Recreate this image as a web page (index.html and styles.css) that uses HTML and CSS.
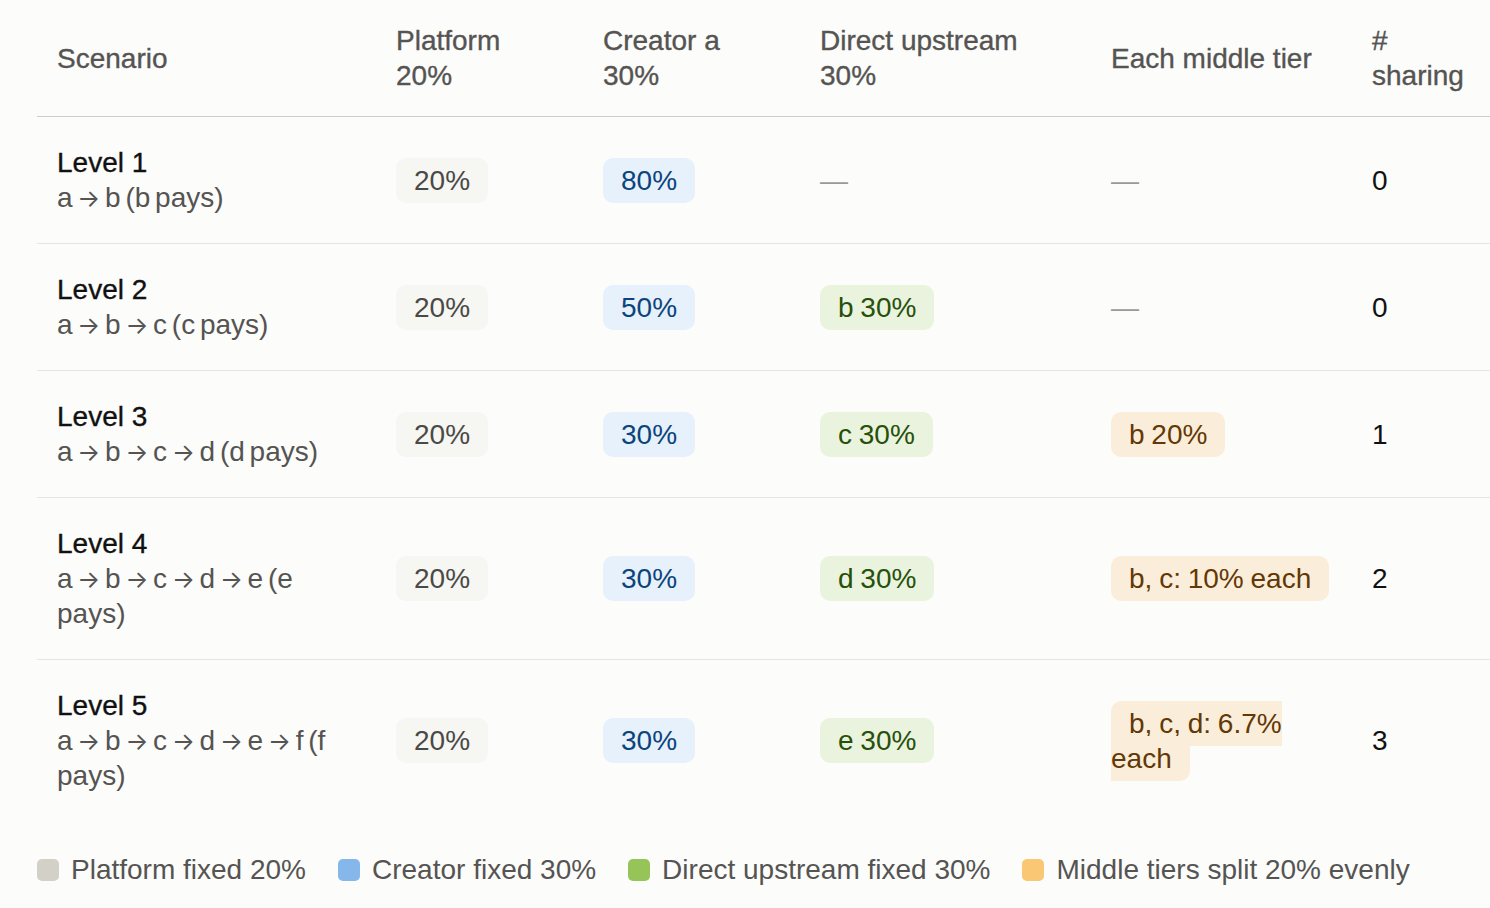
FILE: index.html
```html
<!DOCTYPE html>
<html lang="en">
<head>
<meta charset="utf-8">
<title>Revenue sharing scenarios</title>
<link rel="stylesheet" href="styles.css">
</head>
<body>
<main class="page">
  <table class="split-table">
    <colgroup>
      <col class="c-scen"><col class="c-plat"><col class="c-crea"><col class="c-dir"><col class="c-mid"><col class="c-num">
    </colgroup>
    <thead>
      <tr>
        <th>Scenario</th>
        <th>Platform 20%</th>
        <th>Creator a 30%</th>
        <th>Direct upstream 30%</th>
        <th>Each middle tier</th>
        <th># sharing</th>
      </tr>
    </thead>
    <tbody>
      <tr>
        <td><div class="lvl">Level 1</div><div class="path">a <span class="arr">→</span> b (b pays)</div></td>
        <td><span class="pill p-gray">20%</span></td>
        <td><span class="pill p-blue">80%</span></td>
        <td><span class="dash">—</span></td>
        <td><span class="dash">—</span></td>
        <td class="num">0</td>
      </tr>
      <tr>
        <td><div class="lvl">Level 2</div><div class="path">a <span class="arr">→</span> b <span class="arr">→</span> c (c pays)</div></td>
        <td><span class="pill p-gray">20%</span></td>
        <td><span class="pill p-blue">50%</span></td>
        <td><span class="pill p-green">b 30%</span></td>
        <td><span class="dash">—</span></td>
        <td class="num">0</td>
      </tr>
      <tr>
        <td><div class="lvl">Level 3</div><div class="path">a <span class="arr">→</span> b <span class="arr">→</span> c <span class="arr">→</span> d (d pays)</div></td>
        <td><span class="pill p-gray">20%</span></td>
        <td><span class="pill p-blue">30%</span></td>
        <td><span class="pill p-green">c 30%</span></td>
        <td><span class="pill p-amber">b 20%</span></td>
        <td class="num">1</td>
      </tr>
      <tr>
        <td><div class="lvl">Level 4</div><div class="path">a <span class="arr">→</span> b <span class="arr">→</span> c <span class="arr">→</span> d <span class="arr">→</span> e (e pays)</div></td>
        <td><span class="pill p-gray">20%</span></td>
        <td><span class="pill p-blue">30%</span></td>
        <td><span class="pill p-green">d 30%</span></td>
        <td><span class="pill p-amber nowrap">b, c: 10% each</span></td>
        <td class="num">2</td>
      </tr>
      <tr>
        <td><div class="lvl">Level 5</div><div class="path">a <span class="arr">→</span> b <span class="arr">→</span> c <span class="arr">→</span> d <span class="arr">→</span> e <span class="arr">→</span> f (f pays)</div></td>
        <td><span class="pill p-gray">20%</span></td>
        <td><span class="pill p-blue">30%</span></td>
        <td><span class="pill p-green">e 30%</span></td>
        <td><span class="pill p-amber">b, c, d: 6.7% each</span></td>
        <td class="num">3</td>
      </tr>
    </tbody>
  </table>
  <ul class="legend">
    <li><span class="sw sw-gray"></span>Platform fixed 20%</li>
    <li><span class="sw sw-blue"></span>Creator fixed 30%</li>
    <li><span class="sw sw-green"></span>Direct upstream fixed 30%</li>
    <li><span class="sw sw-amber"></span>Middle tiers split 20% evenly</li>
  </ul>
</main>
</body>
</html>
```
FILE: styles.css
```css
html, body {
  margin: 0;
  padding: 0;
  overflow: hidden;
  background: #fcfcfb;
}
body {
  font-family: "Liberation Sans", Arial, sans-serif;
  font-size: 28px;
  line-height: 35px;
  color: #555452;
}
.page {
  padding: 0 0 0 37px;
}
.split-table {
  border-collapse: collapse;
  table-layout: fixed;
  width: 1455px;
}
.c-scen { width: 339px; }
.c-plat { width: 207px; }
.c-crea { width: 217px; }
.c-dir { width: 291px; }
.c-mid { width: 261px; }
.c-num { width: 140px; }

.split-table th {
  text-align: left;
  font-weight: 400;
  color: #555452;
  -webkit-text-stroke: 0.35px currentColor;
  padding: 23px 20px;
  vertical-align: middle;
  border-bottom: 1px solid #cfcecb;
}
.split-table td {
  padding: 28px 20px;
  vertical-align: middle;
  border-bottom: 1px solid #e6e5e1;
}
.split-table tbody tr:last-child td {
  border-bottom: none;
}
.lvl {
  color: #111;
  -webkit-text-stroke: 0.35px currentColor;
}
.path {
  color: #555452;
  word-spacing: -3px;
}
.arr {
  font-family: Inter, "DejaVu Sans", sans-serif;
  font-size: 24px;
  line-height: 24px;
  word-spacing: 0;
}
.num {
  color: #111;
}
.dash {
  color: #9a9995;
}
.pill {
  padding: 7px 18px;
  border-radius: 10px;
  word-spacing: -1px;
}
.nowrap {
  white-space: nowrap;
}
.p-gray { background: #f6f6f3; color: #4a4946; }
.p-blue { background: #e6f1fb; color: #0c447c; }
.p-green { background: #eaf3de; color: #27500a; }
.p-amber { background: #faeeda; color: #633806; }

.legend {
  list-style: none;
  margin: 31px 0 0;
  padding: 0;
  display: flex;
  gap: 32px;
  color: #555452;
}
.legend li {
  display: flex;
  align-items: center;
  gap: 12px;
}
.sw {
  width: 22px;
  height: 22px;
  border-radius: 5px;
  flex: none;
}
.sw-gray { background: #d3d1c7; }
.sw-blue { background: #85b7eb; }
.sw-green { background: #97c459; }
.sw-amber { background: #fac775; }
```
